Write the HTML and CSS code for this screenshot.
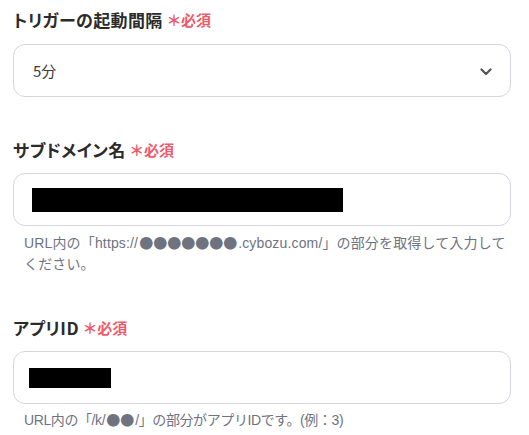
FILE: index.html
```html
<!DOCTYPE html>
<html lang="ja">
<head>
<meta charset="utf-8">
<link rel="stylesheet" href="styles.css">
</head>
<body>
<div class="form">
  <div class="field">
    <div class="label">トリガーの起動間隔<span class="req"><span class="ast">＊</span>必須</span></div>
    <div class="box select">
      <span class="value">5分</span>
      <svg class="chev" width="12" height="8" viewBox="0 0 12 8"><path d="M1.5 1.5 L6 6 L10.5 1.5" fill="none" stroke="#555" stroke-width="2.2" stroke-linecap="round" stroke-linejoin="round"/></svg>
    </div>
  </div>
  <div class="field">
    <div class="label">サブドメイン名<span class="req"><span class="ast">＊</span>必須</span></div>
    <div class="box input pad2"><div class="redact r1"></div></div>
    <p class="help">URL内の「https://<span class="dot">●●●●●●●</span>.cybozu.com/」の部分を取得して入力してください。</p>
  </div>
  <div class="field">
    <div class="label">アプリID<span class="req"><span class="ast">＊</span>必須</span></div>
    <div class="box input pad3"><div class="redact r2"></div></div>
    <p class="help help-short">URL内の「/k/<span class="dot">●●</span>/」の部分がアプリIDです。(例：3)</p>
  </div>
</div>
</body>
</html>
```
FILE: styles.css
```css
html, body {
  margin: 0;
  padding: 0;
  background: #fff;
}
body {
  font-family: "Noto Sans CJK JP", "Noto Sans", sans-serif;
  color: #2b2b2b;
}
.form {
  width: 498px;
  margin-left: 13px;
  padding-top: 8px;
  display: flex;
  flex-direction: column;
  gap: 41px;
}
.field {
  display: flex;
  flex-direction: column;
}
.label {
  font-size: 17px;
  font-weight: 700;
  line-height: 24px;
  letter-spacing: 0.4px;
  font-feature-settings: "palt";
  color: #2b2b2b;
  display: flex;
  align-items: center;
}
.req {
  color: #f0596c;
  font-size: 15px;
  font-weight: 700;
  margin-left: 5px;
  letter-spacing: 0;
  display: flex;
  align-items: center;
}
.ast {
  font-size: 15px;
  margin-right: 1px;
}
.box {
  box-sizing: border-box;
  height: 53px;
  border: 1px solid #d3d6e2;
  border-radius: 12px;
  margin-top: 12px;
  display: flex;
  align-items: center;
}
.select {
  padding: 0 18px 0 19px;
  justify-content: space-between;
}
.value {
  font-size: 15px;
  color: #3a3a3a;
}
.chev {
  display: block;
  margin-top: 2px;
}
.input {
  margin-top: 11px;
}
.pad2 { padding-left: 18px; }
.pad3 { padding-left: 15px; }
.redact {
  background: #000;
}
.r1 { width: 311px; height: 24px; }
.r2 { width: 82px; height: 20px; margin-top: 1px; }
.help {
  margin: 6px 0 0;
  padding-left: 11px;
  font-family: "Liberation Sans", "Noto Sans CJK JP", sans-serif;
  font-size: 14px;
  line-height: 21px;
  letter-spacing: 0.15px;
  color: #6f7380;
}
.dot {
  font-family: "Noto Sans CJK JP", sans-serif;
  margin: 0 1px;
  letter-spacing: 0;
}
.help-short {
  margin-top: 5px;
  letter-spacing: -0.4px;
}
```
